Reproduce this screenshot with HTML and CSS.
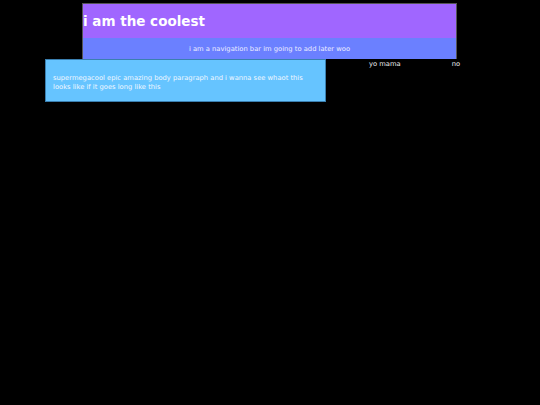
FILE: index.html
```html
<!DOCTYPE html>
<html>
<head>
<meta charset="utf-8">
<link rel="stylesheet" href="styles.css">
</head>
<body>
<div class="top">
  <h1 class="title">i am the coolest</h1>
  <div class="nav">i am a navigation bar im going to add later woo</div>
</div>
<div class="row">
  <div class="card">supermegacool epic amazing body paragraph and i wanna see whaot this looks like if it goes long like this</div>
  <span class="item yo">yo mama</span>
  <span class="item no">no</span>
</div>
</body>
</html>
```
FILE: styles.css
```css
html, body { margin: 0; padding: 0; background: #000; }
body { font-family: "DejaVu Sans", Verdana, sans-serif; color: #fff; }
.top {
  margin: 3px 0 0 82px;
  width: 375px;
  border: 1px solid #555;
  border-bottom: none;
  box-sizing: border-box;
}
.title {
  margin: 0;
  background: #a066ff;
  height: 34px;
  line-height: 34px;
  font-size: 13.5px;
  font-weight: bold;
  padding: 0;
}
.nav {
  background: #6b80ff;
  height: 21px;
  box-sizing: border-box;
  padding-top: 1px;
  line-height: 20px;
  text-align: center;
  font-size: 6.75px;
  color: #eef;
}
.row { display: flex; align-items: flex-start; }
.card {
  margin-left: 45px;
  width: 281px;
  height: 43px;
  box-sizing: border-box;
  background: #66c4ff;
  border: 1px solid #3a7fb0;
  padding: 14px 7px 0 7px;
  font-size: 6.75px;
  line-height: 8.5px;
  color: #f2f8ff;
}
.item { font-size: 6.75px; line-height: 9px; margin-top: 1px; color: #eee; }
.yo { margin-left: 43px; }
.no { margin-left: 51px; }
```
